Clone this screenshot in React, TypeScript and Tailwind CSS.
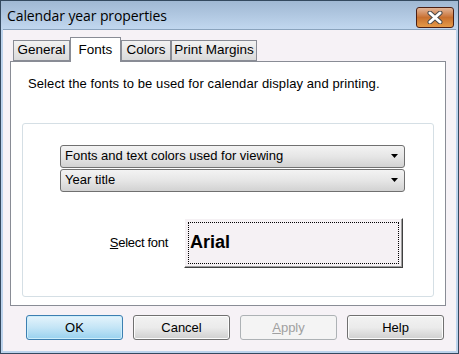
import React from 'react';

const tabs = [
  { label: 'General', w: 'w-[57px]' },
  { label: 'Fonts', w: 'w-[51px]', active: true },
  { label: 'Colors', w: 'w-[50px]' },
  { label: 'Print Margins', w: 'w-[86px]' },
];

function Combo({ text }: { text: string }) {
  return (
    <div className="flex h-[23px] w-[345px] items-center justify-between rounded-[3px] border border-[#707070] bg-gradient-to-b from-[#f3f3f3] via-[#e6e6e6] to-[#d2d2d2] pl-[4px] pr-[6px] text-[13px] text-black">
      <span>{text}</span>
      <svg width="7" height="4" viewBox="0 0 7 4">
        <path d="M0 0h7L3.5 4z" fill="#000" />
      </svg>
    </div>
  );
}

function Btn({ children, kind }: { children: React.ReactNode; kind?: 'default' | 'disabled' }) {
  const cls =
    kind === 'default'
      ? 'border-[#3c7fb1] bg-gradient-to-b from-[#e5f4fc] via-[#c4e5f6] to-[#98d1ef] text-black shadow-[inset_0_0_0_1px_#cdeefb]'
      : kind === 'disabled'
        ? 'border-[#adb2b5] bg-[#f4f4f4] text-[#a0a0a0]'
        : 'border-[#707070] bg-gradient-to-b from-[#f2f2f2] via-[#ebebeb] to-[#cfcfcf] text-black shadow-[inset_0_0_0_1px_#fcfcfc]';
  return (
    <div className={`flex h-[25px] w-[97px] items-center justify-center rounded-[3px] border text-[13px] ${cls}`}>
      {children}
    </div>
  );
}

export default function App() {
  return (
    <div className="flex h-[354px] w-[459px] flex-col border border-[#34495f] bg-[#bcd3ec] font-['Liberation_Sans',Arial,sans-serif]">
      {/* title bar */}
      <div className="flex h-[28px] items-center justify-between bg-gradient-to-b from-[#a0b8d3] to-[#c1d7ef] pl-[6px] pr-[4px]">
        <span className="font-['Open_Sans',sans-serif] text-[14px] text-black tracking-[-0.1px]">Calendar year properties</span>
        <div className="mt-[4px] flex h-[21px] w-[38px] items-center justify-center rounded-[3px] border border-[#4b1f14] bg-gradient-to-b from-[#e2b597] via-[#c8702f] to-[#e59a48]">
          <svg width="16" height="13" viewBox="0 0 16 13">
            <path d="M3 2l10 9M13 2L3 11" stroke="#4a4a4a" strokeWidth="5" strokeLinecap="round" />
            <path d="M3 2l10 9M13 2L3 11" stroke="#fff" strokeWidth="3" strokeLinecap="round" />
          </svg>
        </div>
      </div>

      {/* client area */}
      <div className="mx-[2px] mb-[2px] flex flex-1 flex-col border-t border-[#8aa3bd] bg-[#f6f2f6] pl-[7px] pt-[7px]">
        <div className="flex h-[24px] items-end pl-[3px]">
          {tabs.map((t) =>
            t.active ? (
              <div
                key={t.label}
                className={`${t.w} relative z-10 -mb-px flex h-[25px] justify-center border border-b-0 border-[#898c95] bg-white pt-[2px] text-[13.5px] text-black`}
              >
                {t.label}
              </div>
            ) : (
              <div
                key={t.label}
                className={`${t.w} flex h-[21px] items-center justify-center border border-[#898c95] bg-gradient-to-b from-[#f2f2f2] to-[#dadada] text-[13.5px] text-black`}
              >
                {t.label}
              </div>
            )
          )}
        </div>

        <div className="flex h-[245px] w-[436px] flex-col border border-[#898c95] bg-white px-[11px] pb-[8px] pt-[12px]">
          <p className="pl-[6px] text-[13px] tracking-[0.1px] text-black">Select the fonts to be used for calendar display and printing.</p>
          <div className="mt-[29px] flex flex-1 flex-col rounded-[3px] border border-[#d5dfe5] pl-[37px] pt-[21px]">
            <div className="flex flex-col gap-[1px]">
              <Combo text="Fonts and text colors used for viewing" />
              <Combo text="Year title" />
            </div>
            <div className="mt-[26px] flex items-center">
              <span className="w-[124px] pr-[16px] text-right text-[13px] tracking-[-0.3px] text-black">
                <span className="underline">S</span>elect font
              </span>
              <div className="flex h-[50px] w-[219px] border border-t-white border-l-white border-r-[#404040] border-b-[#404040] bg-[#f5f1f4] p-[3px] shadow-[inset_-1px_-1px_0_#a0a0a0]">
                <div className="flex flex-1 items-center border border-dotted border-black pl-[1px]">
                  <span className="text-[18px] font-bold text-black">Arial</span>
                </div>
              </div>
            </div>
          </div>
        </div>

        <div className="mt-[9px] flex gap-[10px] pl-[16px]">
          <Btn kind="default">OK</Btn>
          <Btn>Cancel</Btn>
          <Btn kind="disabled">
            <span>
              <span className="underline">A</span>pply
            </span>
          </Btn>
          <Btn>Help</Btn>
        </div>
      </div>
    </div>
  );
}
